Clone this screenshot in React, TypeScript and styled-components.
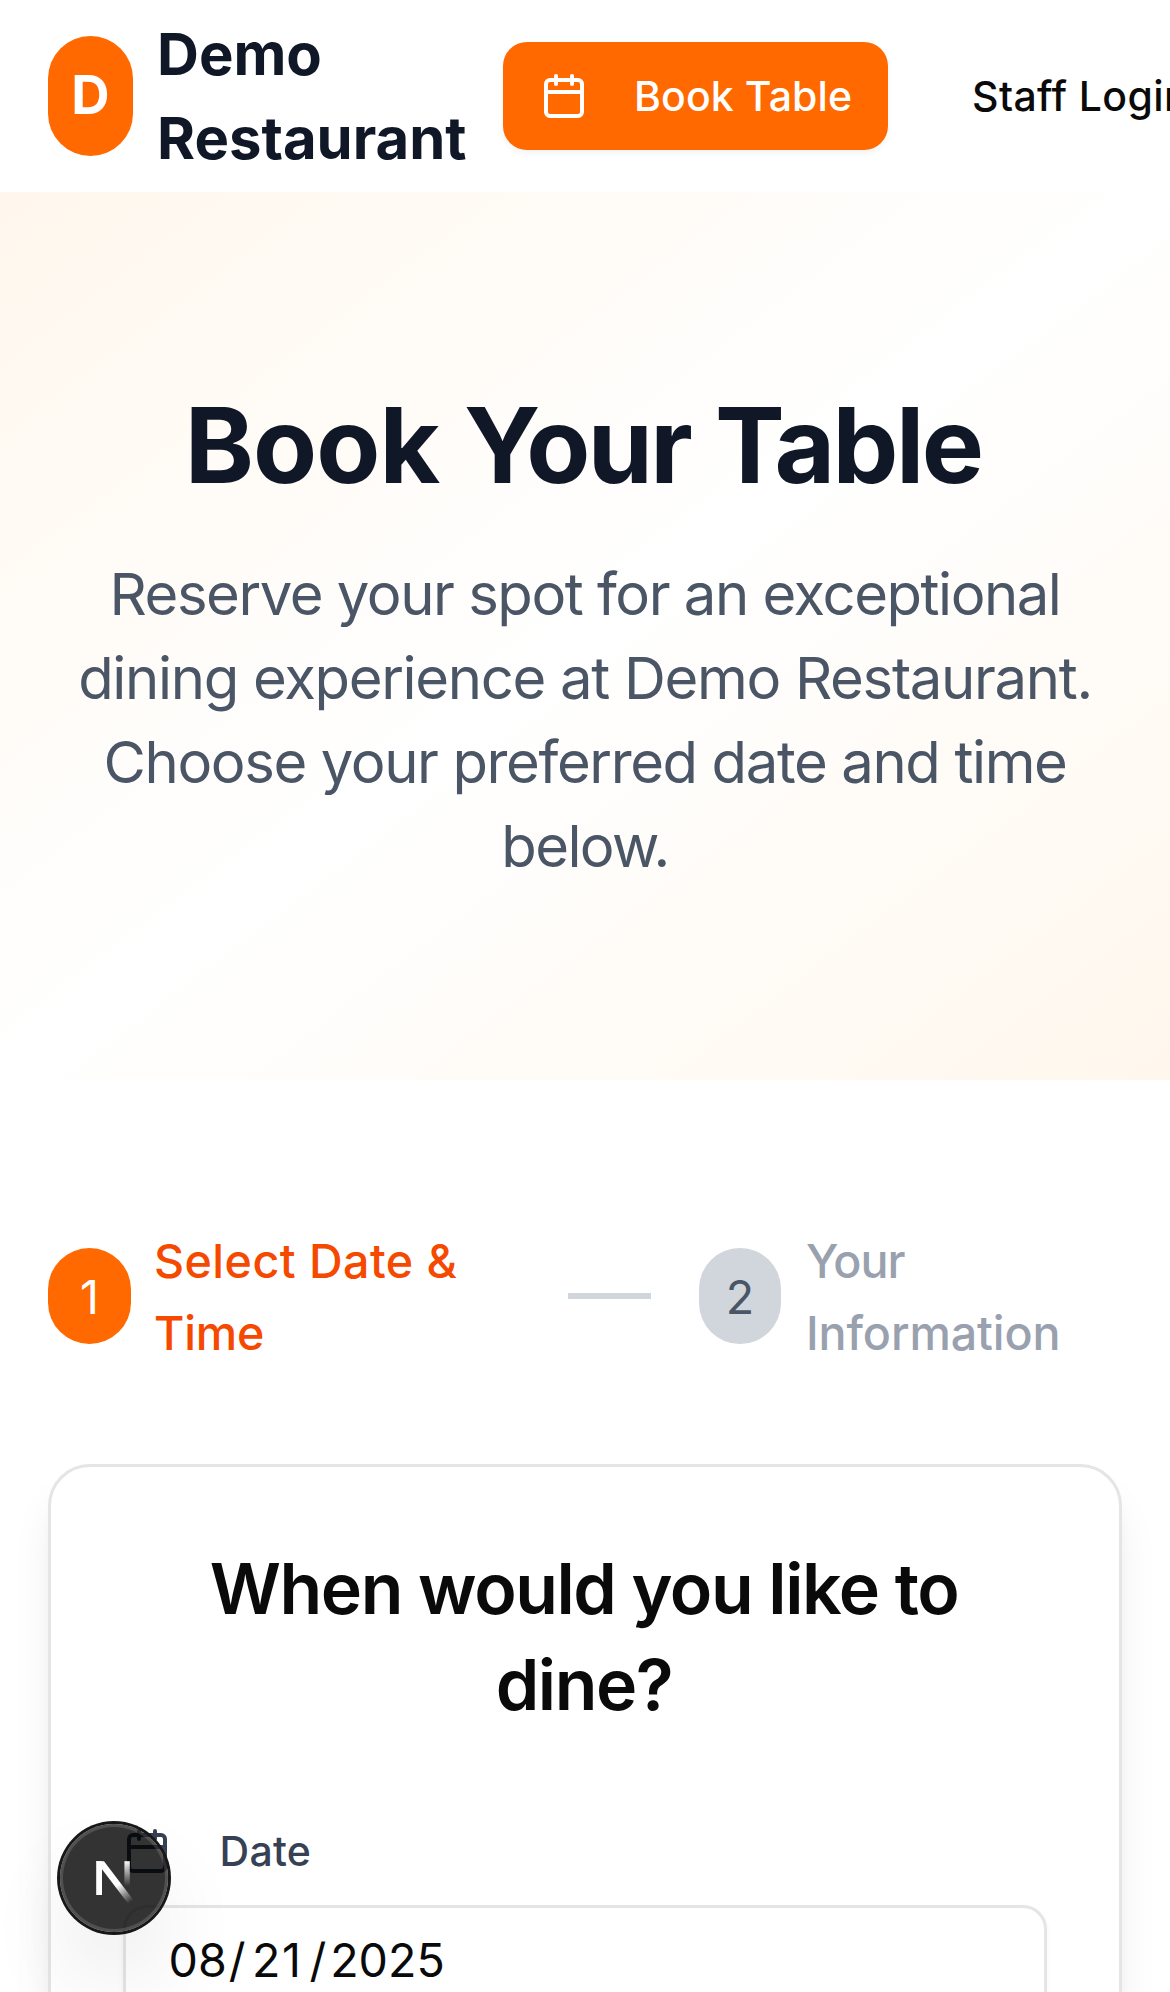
import React from "react";
import styled, { createGlobalStyle } from "styled-components";

const GlobalStyle = createGlobalStyle`
  *, *::before, *::after { box-sizing: border-box; }
  html, body { margin: 0; padding: 0; overflow: hidden; background: #ffffff; }
  body {
    font-family: Inter, "Liberation Sans", sans-serif;
    color: #0a0a0a;
    -webkit-font-smoothing: antialiased;
  }
  h1, h2, p { margin: 0; }
  button { font-family: inherit; border: 0; }
`;

const Page = styled.div`
  width: 1170px;
  height: 1992px;
  overflow: hidden;
  background: #ffffff;
`;

const Header = styled.header`
  display: flex;
  align-items: center;
  height: 192px;
  padding-left: 48px;
  background: #ffffff;
`;

const Brand = styled.div`
  display: flex;
  align-items: center;
  gap: 24px;
  flex: 0 0 455px;
`;

const Logo = styled.span`
  display: flex;
  align-items: center;
  justify-content: center;
  width: 85px;
  height: 120px;
  flex: none;
  padding-bottom: 3px;
  border-radius: 9999px;
  background: #ff6900;
  color: #ffffff;
  font-size: 53px;
  font-weight: 700;
  line-height: 84px;
`;

const BrandName = styled.span`
  color: #101828;
  font-size: 58px;
  font-weight: 700;
  line-height: 84px;
`;

const Nav = styled.nav`
  display: flex;
  align-items: center;
  gap: 48px;
  flex: none;
`;

const BookButton = styled.button`
  display: flex;
  align-items: center;
  gap: 46px;
  width: 385px;
  height: 108px;
  padding: 0 0 0 37px;
  border-radius: 24px;
  background: #ff6900;
  color: #ffffff;
  font-size: 41px;
  font-weight: 500;
  line-height: 60px;
  letter-spacing: 0.1px;
  white-space: nowrap;
  box-shadow: 0 3px 6px rgba(0, 0, 0, 0.05);
`;

const StaffButton = styled.button`
  height: 96px;
  padding: 0 36px;
  background: transparent;
  color: #0a0a0a;
  font-size: 41px;
  font-weight: 500;
  line-height: 60px;
  letter-spacing: 0.4px;
  white-space: nowrap;
`;

const Hero = styled.section`
  height: 888px;
  padding: 192px 48px;
  background: linear-gradient(to bottom right, #fff7ed, #ffffff, #fff7ed);
  text-align: center;
`;

const HeroTitle = styled.h1`
  color: #101828;
  font-size: 104.6px;
  font-weight: 700;
  line-height: 120px;
  padding: 1px 4px 0 0;
  margin-bottom: 47px;
`;

const TitleWord = styled.span<{ $tracking: number }>`
  letter-spacing: ${(p) => p.$tracking}px;
`;

const HeroText = styled.p`
  color: #4a5565;
  font-size: 58px;
  line-height: 84px;
  white-space: nowrap;
`;

const HeroLine = styled.span<{ $tracking: number }>`
  display: block;
  letter-spacing: ${(p) => p.$tracking}px;
`;

const Booking = styled.main`
  padding: 144px 48px 0;
`;

const Steps = styled.div`
  display: flex;
  align-items: center;
  gap: 48px;
  height: 144px;
  margin-bottom: 96px;
`;

const Step = styled.div<{ $width: number; $gap: number }>`
  display: flex;
  align-items: center;
  gap: ${(p) => p.$gap}px;
  width: ${(p) => p.$width}px;
  flex: none;
`;

const StepNumber = styled.span<{ $active?: boolean }>`
  display: flex;
  align-items: center;
  justify-content: center;
  flex: none;
  width: ${(p) => (p.$active ? 83 : 82)}px;
  height: 96px;
  padding-top: 2px;
  border-radius: 9999px;
  background: ${(p) => (p.$active ? "#ff6900" : "#d1d5dc")};
  color: ${(p) => (p.$active ? "#ffffff" : "#4a5565")};
  font-size: 46.6px;
  line-height: 72px;
`;

const StepLabel = styled.span<{ $active?: boolean }>`
  display: flex;
  flex-direction: column;
  padding-top: 2px;
  color: ${(p) => (p.$active ? "#f54900" : "#99a1af")};
  font-size: 46.6px;
  font-weight: 500;
  line-height: 72px;
  white-space: nowrap;
`;

const LabelLine = styled.span<{ $tracking?: number }>`
  letter-spacing: ${(p) => p.$tracking ?? 0}px;
`;

const StepDivider = styled.span`
  width: 83px;
  height: 6px;
  flex: none;
  background: #d1d5dc;
`;

const Card = styled.section`
  height: 1200px;
  padding: 74px 72px 0;
  border: 3px solid #e5e5e5;
  border-radius: 42px;
  background: #ffffff;
  box-shadow: 0 30px 45px -9px rgba(0, 0, 0, 0.1), 0 12px 18px -12px rgba(0, 0, 0, 0.1);
`;

const CardTitle = styled.h2`
  margin-bottom: 94px;
  padding-right: 2px;
  font-size: 69.8px;
  font-weight: 600;
  line-height: 96px;
  letter-spacing: -1.45px;
  text-align: center;
  white-space: nowrap;
`;

const FieldLabel = styled.label`
  display: flex;
  align-items: center;
  gap: 48.5px;
  height: 48px;
  margin-bottom: 30px;
  color: #364153;
  font-size: 41px;
  font-weight: 500;
  line-height: 48px;
  letter-spacing: 0.3px;
`;

const DateInput = styled.div`
  display: flex;
  align-items: center;
  height: 110px;
  padding-left: 42.5px;
  border: 3px solid #e5e5e5;
  border-radius: 24px;
  font-size: 46.6px;
  line-height: 72px;
  box-shadow: 0 3px 6px rgba(0, 0, 0, 0.05);
`;

const DatePart = styled.span<{ $after?: number; $tracking?: number }>`
  margin-right: ${(p) => p.$after ?? 0}px;
  letter-spacing: ${(p) => p.$tracking ?? 0}px;
`;

const DevBadge = styled.div`
  position: fixed;
  left: 60px;
  top: 1824px;
  width: 108px;
  height: 108px;
  border-radius: 50%;
  background: rgba(0, 0, 0, 0.8);
  box-shadow: 0 0 0 3px #171717, inset 0 0 0 3px rgba(255, 255, 255, 0.14),
    0 48px 96px -24px rgba(0, 0, 0, 0.24);

  svg { display: block; }
`;

const CalendarIcon = () => (
  <svg width="48" height="48" viewBox="0 0 24 24" fill="none" stroke="currentColor"
    strokeWidth="2" strokeLinecap="round" strokeLinejoin="round">
    <path d="M8 2v4M16 2v4" />
    <rect width="18" height="18" x="3" y="4" rx="2" />
    <path d="M3 10h18" />
  </svg>
);

const NextMark = () => (
  <svg width="108" height="108" viewBox="0 0 108 108" fill="none">
    <defs>
      <linearGradient id="diagonal" gradientUnits="userSpaceOnUse" x1="59" y1="60" x2="71.5" y2="77.5">
        <stop stopColor="#fff" />
        <stop offset="1" stopColor="#fff" stopOpacity="0" />
      </linearGradient>
      <linearGradient id="stem" gradientUnits="userSpaceOnUse" x1="67" y1="37" x2="67" y2="62">
        <stop stopColor="#fff" />
        <stop offset="1" stopColor="#fff" stopOpacity="0" />
      </linearGradient>
    </defs>
    <path d="M64.4 37.2h5.4V62h-5.4z" fill="url(#stem)" />
    <path d="M36.2 37.2H44L73.4 76L68.4 80L42 45.3L36.2 37.7z" fill="url(#diagonal)" />
    <path d="M36.2 37.2H42V71h-5.8z" fill="#fff" />
  </svg>
);

export default function App() {
  return (
    <Page>
      <GlobalStyle />
      <Header>
        <Brand>
          <Logo>D</Logo>
          <BrandName>Demo Restaurant</BrandName>
        </Brand>
        <Nav>
          <BookButton>
            <CalendarIcon />
            Book Table
          </BookButton>
          <StaffButton>Staff Login</StaffButton>
        </Nav>
      </Header>

      <Hero>
        <HeroTitle>
          <TitleWord $tracking={-0.9}>Book</TitleWord>{" "}
          <TitleWord $tracking={-2.7}>Your</TitleWord>{" "}
          <TitleWord $tracking={-2.6}>Table</TitleWord>
        </HeroTitle>
        <HeroText>
          <HeroLine $tracking={-1.47}>Reserve your spot for an exceptional </HeroLine>
          <HeroLine $tracking={-1.32}>dining experience at Demo Restaurant. </HeroLine>
          <HeroLine $tracking={-1.39}>Choose your preferred date and time </HeroLine>
          <HeroLine $tracking={-1.6}>below.</HeroLine>
        </HeroText>
      </Hero>

      <Booking>
        <Steps>
          <Step $width={472} $gap={23}>
            <StepNumber $active>1</StepNumber>
            <StepLabel $active>
              <LabelLine $tracking={0.45}>Select Date &amp;</LabelLine>
              <LabelLine $tracking={-0.2}>Time</LabelLine>
            </StepLabel>
          </Step>
          <StepDivider />
          <Step $width={423} $gap={25}>
            <StepNumber>2</StepNumber>
            <StepLabel>
              <LabelLine $tracking={-1}>Your</LabelLine>
              <LabelLine $tracking={-0.1}>Information</LabelLine>
            </StepLabel>
          </Step>
        </Steps>

        <Card>
          <CardTitle>
            When would you like to
            <br />
            dine?
          </CardTitle>
          <FieldLabel>
            <CalendarIcon />
            Date
          </FieldLabel>
          <DateInput>
            <DatePart $after={2}>08</DatePart>
            <DatePart $after={6.5}>/</DatePart>
            <DatePart $after={7} $tracking={1.5}>21</DatePart>
            <DatePart $after={4}>/</DatePart>
            <DatePart>2025</DatePart>
          </DateInput>
        </Card>
      </Booking>

      <DevBadge>
        <NextMark />
      </DevBadge>
    </Page>
  );
}
